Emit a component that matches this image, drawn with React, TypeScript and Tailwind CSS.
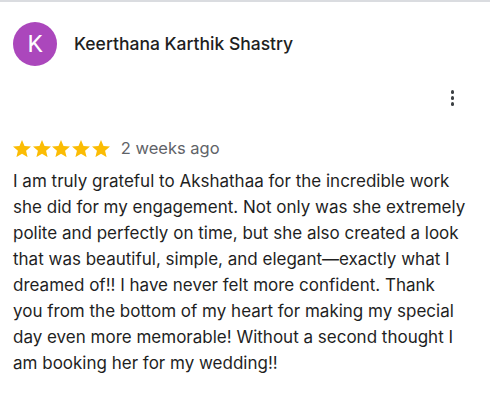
import React from "react";

function Star() {
  return (
    <svg viewBox="2 2 20 19.3" className="w-[18px] h-[17.4px]" fill="#fbbc04">
      <path d="M12 17.27L18.18 21l-1.64-7.03L22 9.24l-7.19-.61L12 2 9.19 8.63 2 9.24l5.46 4.73L5.82 21z" />
    </svg>
  );
}

export default function App() {
  return (
    <div
      className="w-[490px] h-[402px] bg-white border-t-2 border-[#dadce0] overflow-hidden"
      style={{ fontFamily: "Inter, Roboto, 'Liberation Sans', sans-serif" }}
    >
      <div className="pl-[13px] pr-[23px] pt-[20px]">
        <div className="flex items-center">
          <div className="w-[44px] h-[44px] rounded-full bg-[#ab47bc] flex items-center justify-center text-white text-[24px] leading-none" style={{ fontFamily: "Roboto, sans-serif" }}>
            K
          </div>
          <div className="ml-[17px] text-[17.5px] font-medium text-[#1f1f1f]">
            Keerthana Karthik Shastry
          </div>
        </div>
        <div className="flex justify-end h-[26px] mt-[22px] pr-[13px]">
          <div className="flex flex-col items-center gap-[2.5px] pt-[2px]">
            <span className="w-[3.5px] h-[3.5px] rounded-full bg-[#3c4043]" />
            <span className="w-[3.5px] h-[3.5px] rounded-full bg-[#3c4043]" />
            <span className="w-[3.5px] h-[3.5px] rounded-full bg-[#3c4043]" />
          </div>
        </div>
        <div className="flex items-center mt-[22px]">
          <div className="flex gap-[1.7px]">
            <Star />
            <Star />
            <Star />
            <Star />
            <Star />
          </div>
          <span className="ml-[11px] text-[16.5px] text-[#5f6368]">2 weeks ago</span>
        </div>
        <p className="mt-[7px] text-[17px] leading-[26px] text-[#1f1f1f]">
          I am truly grateful to Akshathaa for the incredible work she did for my engagement. Not only was she extremely polite and perfectly on time, but she also created a look that was beautiful, simple, and elegant—exactly what I dreamed of!! I have never felt more confident. Thank you from the bottom of my heart for making my special day even more memorable! Without a second thought I am booking her for my wedding!!
        </p>
      </div>
    </div>
  );
}
